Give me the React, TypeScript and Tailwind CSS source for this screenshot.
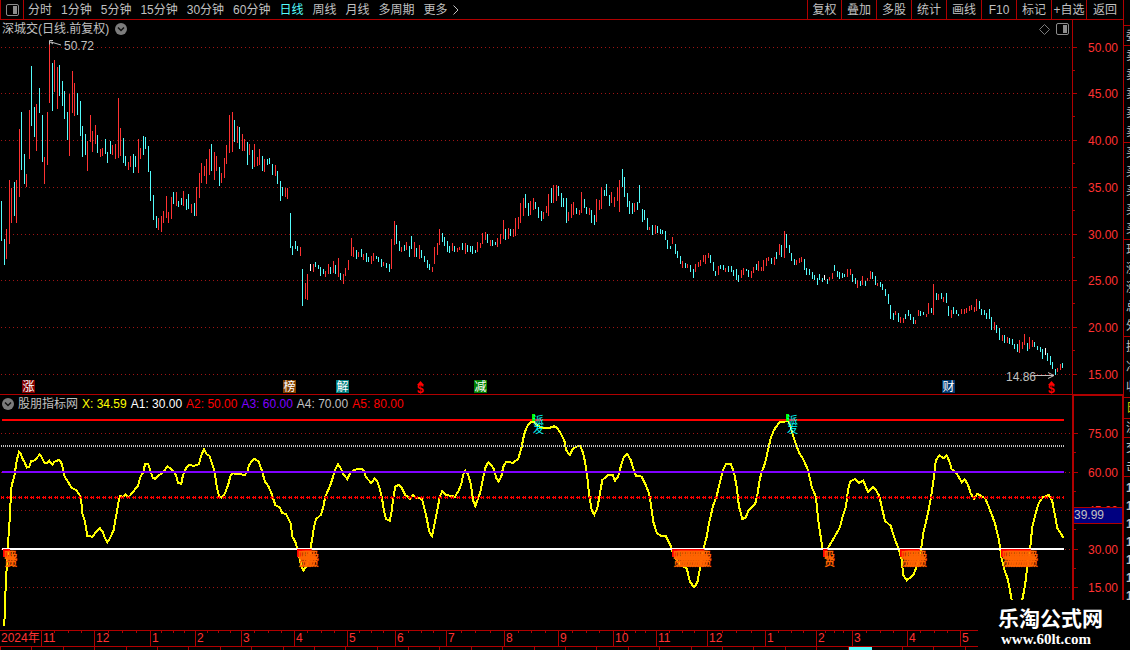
import clsx from "clsx";

const PERIODS = ["分时", "1分钟", "5分钟", "15分钟", "30分钟", "60分钟", "日线", "周线", "月线", "多周期", "更多"];
const TOOLS = ["复权", "叠加", "多股", "统计", "画线", "F10", "标记", "+自选", "返回"];

const FONT = "font-['Liberation_Sans','Noto_Sans_CJK_SC',sans-serif]";

// one entry per trading day: colour (c down, r up, w flat), top, bottom
const CANDLES = `
c201,241 c239,265 r229,259 r180,244 r188,223 c182,216 r180,223 r129,197 c112,170 c154,184
r174,187 r110,159 c66,126 c107,137 r104,151 c88,113 c115,162 r157,184 r112,165 r42,103
c63,111 r60,92 r67,109 c65,96 c81,106 c91,119 c112,140 r94,156 r71,113 r83,116
c93,115 c101,136 c126,157 c134,155 r141,171 r115,142 r131,152 r125,144 c135,153 r149,157
r148,156 c139,154 c152,163 c141,154 r145,155 r144,159 r98,158 r128,156 c138,163 c156,166
r162,170 r156,167 c154,173 c156,167 r139,173 r148,159 c136,155 c137,149 c146,172 c171,201
c195,220 c216,228 r218,230 r216,232 r211,223 r196,218 r212,223 r197,219 c192,204 r192,206
c201,207 c198,205 r191,206 c199,210 c194,209 r204,213 c203,216 r187,216 r173,198 r163,183
r166,176 r159,184 r149,175 c144,171 r152,180 r156,171 c167,186 r173,183 r158,178 r145,164
r115,153 r112,152 c120,142 r126,143 c127,149 r134,151 r139,151 c142,165 r144,155 c150,169
r144,167 r157,166 r149,165 c156,171 r159,172 c159,165 c158,164 c164,175 r165,176 c171,184
c181,201 c187,196 r188,197 r188,199 c213,248 c246,255 c241,249 c246,251 r247,256 c269,306
r283,299 r274,300 w264,271 r264,272 c262,267 c265,269 c267,276 c269,274 r271,277 r264,274
c267,274 r261,273 c265,274 r258,277 c273,280 r274,284 r268,276 r260,270 r238,256 r247,257
c250,259 r252,257 c249,257 r254,260 c253,262 c257,262 r256,264 r253,261 c256,259 c257,262
c259,267 r262,266 c263,268 c264,272 r239,269 r221,245 c225,244 c241,251 r247,252 c245,251
r242,250 c246,257 c236,249 r242,257 c248,257 r245,259 c250,258 c256,262 c260,268 c264,270
r267,272 r247,264 r243,255 r229,245 c233,242 c237,246 c241,252 c246,253 r243,251 c246,252
r248,252 r247,250 c243,250 r243,254 c245,252 c246,252 c246,254 c250,253 r242,252 r243,248
r233,244 r232,240 c234,243 r240,246 c240,246 c242,245 r238,247 r234,244 r220,239 c229,240
r228,239 c229,236 r229,237 r218,236 r217,229 r203,223 r198,216 c194,208 c203,216 r201,215
r198,210 c202,209 c207,218 c211,221 r212,219 r206,213 r194,216 c188,203 r185,203 r185,201
c186,196 c193,207 c198,207 c198,223 r212,221 r204,218 r202,215 c208,214 r210,215 r192,213
c199,208 c207,214 r208,215 c210,223 c215,225 r199,222 r200,210 r187,209 c190,196 c184,196
c195,206 r192,203 r197,207 r187,201 r180,212 c169,187 c177,197 c193,207 c201,214 c203,214
r203,212 c202,210 c185,203 c209,222 c210,220 c218,230 r227,230 c225,235 r225,234 c226,233
c229,234 c230,234 c231,240 c240,249 c246,249 r237,244 c244,254 c251,258 c256,264 r261,268
c263,268 r264,268 c265,272 c269,278 r264,272 r262,267 r260,266 r255,262 r255,264 r253,258
c255,263 c262,271 c271,276 r266,275 c265,269 c265,270 r268,272 c266,272 c266,272 c270,276
c269,280 c275,282 r270,278 r268,275 c269,271 c270,277 r271,278 r267,273 c264,270 r261,271
r267,271 r260,271 r258,266 r257,261 c258,264 r257,265 c252,259 r244,255 c245,257 r231,258
c234,248 c245,253 c253,261 c259,265 r260,265 r258,263 r257,262 c259,270 c268,275 c269,275
c272,279 c275,280 c278,285 c274,280 c278,282 w275,280 c279,284 r277,280 r273,279 c265,271
c271,277 c272,279 c273,278 c274,277 r269,277 r269,275 c274,282 c278,284 r280,288 c281,286
r276,285 c281,286 r278,281 r271,279 c272,279 c276,285 r283,286 c282,287 c284,290 c289,296
c294,304 c305,319 c313,320 r311,315 c313,322 r317,323 r318,323 c314,319 c310,316 c314,320
c317,324 r320,324 r310,316 c311,316 c312,315 r314,317 r303,314 c308,313 r284,315 c293,300
r294,300 c293,299 r297,302 c293,303 c306,316 r310,318 c307,314 c310,314 c314,316 r309,314
r309,314 r308,313 r306,311 r305,310 r307,312 r299,311 c301,309 c309,315 c310,315 c313,319
c309,319 c317,330 r322,330 c325,333 c328,340 r335,341 c335,343 r337,343 c338,344 c339,345
c344,349 c344,352 r340,353 r342,349 r334,345 c343,351 r337,349 r340,347 c342,347 c346,350
c347,352 c349,359 w348,355 c353,361 c356,365 c362,369 c369,375 r368,372 r364,370 c363,368
`
  .trim()
  .split(/\s+/)
  .map((s, i) => {
    const [top, bottom] = s.slice(1).split(",").map(Number);
    return { x: Math.round(1 + i * 2.533), top, bottom, kind: s[0] };
  });

// oscillator curve, three stretches in 1/3 units from their own x origin
const CURVE = [
  {
    x0: 0,
    pts: `13,709 15,640 18,570 21,520 24,470 27,410 30,380 33,300 37,280 43,260 46,240 50,212 57,186 62,192 68,207 74,217
    80,233 88,230 94,213 104,211 112,202 119,194 126,203 133,218 142,218 148,212 157,224 163,215 177,210 184,218 190,240
    194,260 205,277 215,293 228,300 237,312 243,325 247,370 255,395 262,438 278,440 286,428 300,415 308,425 315,445 322,457
    330,445 341,420 347,385 355,340 360,318 370,320 376,313 386,321 394,312 405,298 414,288 421,262 430,246 435,223 445,223
    451,240 458,263 466,267 478,255 490,246 502,229 512,236 520,243 528,255 534,280 544,281 549,255 558,235 568,224 580,228
    597,223 603,198 612,178 620,193 628,197 636,220 644,245 650,290 657,317 665,323 675,310 685,283 692,255 700,250 715,253
    735,254 743,243 747,225 757,212 764,206 776,215 785,240 795,275 806,290 815,312 826,345 840,353 847,370 857,371 872,400
    877,440 886,455 895,485 902,520 910,542 918,530 928,500 932,470 937,445 942,410 948,388 963,374 970,350 976,320 990,288
    1000,258 1007,236 1014,223 1022,235 1030,253 1042,267 1052,247 1062,241 1076,236 1090,239 1098,262 1114,279 1124,265 1132,273`,
  },
  {
    x0: 380,
    pts: `0,298 6,325 12,362 18,387 29,392 34,370 39,330 46,290 56,284 66,295 76,315 90,326 100,315 110,324 126,326 132,350
    140,385 148,425 156,438 163,405 172,360 179,322 187,303 198,315 225,320 235,304 243,285 250,253 256,242 264,253 272,280
    279,330 286,348 293,328 300,310 308,270 315,235 325,217 335,227 343,240 348,262 355,275 364,260 370,230 378,216 400,218
    415,206 425,170 432,135 440,112 450,98 460,93 470,105 485,113 510,113 522,109 532,114 542,130 554,155 558,180 569,195
    578,178 588,170 600,168 608,185 615,215 622,262 627,310 635,360 643,374 652,355 660,310 667,270 685,255 698,254 705,272
    714,260 722,230 732,200 742,192 752,210 760,235 768,257 785,260 795,280 807,310 813,345 820,395 830,428 842,437 857,438
    866,455 873,470 882,498 900,525 920,535 930,575 942,592 952,578 960,535 970,480 980,440 987,400 1000,345 1010,318
    1020,275 1030,238 1038,222 1053,223 1062,248 1070,290 1077,350 1087,387 1097,383 1105,362 1115,352 1126,340 1132,315`,
  },
  {
    x0: 750,
    pts: `30,265 35,247 45,220 52,190 62,145 72,120 88,97 102,97 112,90 120,105 130,140 148,190 160,208 174,240 185,290
    198,322 204,385 212,440 218,478 232,478 245,455 270,412 278,378 288,350 294,300 300,275 314,267 326,279 340,272 354,306
    368,291 378,300 388,318 396,355 405,392 422,408 432,440 446,478 455,510 460,555 470,571 490,555 502,525 513,480 520,430
    534,370 544,318 552,260 557,213 568,196 582,205 590,196 600,220 605,238 620,250 635,277 644,268 654,285 662,310 672,326
    682,311 706,325 720,360 735,400 747,450 754,500 762,535 774,570 785,629 800,650 818,625 826,580 832,530 840,480 847,410
    857,370 866,340 878,322 896,315 906,330 913,365 922,415 932,430 940,443`,
  },
]
  .flatMap(({ x0, pts }) =>
    pts.trim().split(/\s+/).map((p) => {
      const [x, y] = p.split(",").map(Number);
      return `${(x0 + x / 3).toFixed(1)},${(390 + y / 3).toFixed(1)}`;
    }),
  )
  .join(" ");

const PRICE_TICKS = [
  { y: 47, label: "50.00" },
  { y: 93, label: "45.00" },
  { y: 140, label: "40.00" },
  { y: 187, label: "35.00" },
  { y: 234, label: "30.00" },
  { y: 280, label: "25.00" },
  { y: 327, label: "20.00" },
  { y: 374, label: "15.00" },
];

const OSC_TICKS = [
  { y: 433, label: "75.00" },
  { y: 472, label: "60.00" },
  { y: 510, label: "45.00" },
  { y: 549, label: "30.00" },
  { y: 587, label: "15.00" },
];

const EVENTS = [
  { x: 22, text: "涨", fill: "#800000" },
  { x: 283, text: "榜", fill: "#804000" },
  { x: 336, text: "解", fill: "#008080" },
  { x: 474, text: "减", fill: "#008000" },
  { x: 942, text: "财", fill: "#003870" },
];

// runs of buy signals: first x and number of days
const BUY_RUNS = [
  { x: 3, days: 2 },
  { x: 297, days: 5 },
  { x: 672, days: 12 },
  { x: 823, days: 1 },
  { x: 900, days: 7 },
  { x: 1001, days: 11 },
];

const READOUT = [
  { text: "X: 34.59", color: "text-[#ffff00]" },
  { text: "A1: 30.00", color: "text-white" },
  { text: "A2: 50.00", color: "text-[#ff0000]" },
  { text: "A3: 60.00", color: "text-[#8000ff]" },
  { text: "A4: 70.00", color: "text-[#c0c0c0]" },
  { text: "A5: 80.00", color: "text-[#ff0000]" },
];

const MONTHS = [
  { label: "2024年", w: 41 },
  { label: "11", w: 53 },
  { label: "12", w: 56 },
  { label: "1", w: 45 },
  { label: "2", w: 46 },
  { label: "3", w: 53 },
  { label: "4", w: 53 },
  { label: "5", w: 48 },
  { label: "6", w: 51 },
  { label: "7", w: 58 },
  { label: "8", w: 54 },
  { label: "9", w: 55 },
  { label: "10", w: 43 },
  { label: "11", w: 51 },
  { label: "12", w: 58 },
  { label: "1", w: 51 },
  { label: "2", w: 36 },
  { label: "3", w: 55 },
  { label: "4", w: 53 },
  { label: "5", w: 163 },
];

const QUOTE_BLOCKS = [
  { h: "h-[26px]", rows: [] },
  { h: "h-5", rows: ["委"] },
  { h: "h-[97px]", rows: ["卖", "卖", "卖", "卖", "卖"] },
  { h: "h-[97px]", rows: ["买", "买", "买", "买", "买"] },
  { h: "h-[97px]", rows: ["现", "涨", "涨", "总", "外"] },
  { h: "h-[61px]", rows: ["换", "净", "收"] },
  { h: "h-[21px]", rows: ["日"], yellow: true },
  { h: "h-[19px]", rows: ["流"] },
  { h: "h-[39px]", rows: ["交", "击"] },
];

const candleFill = (kind: string) => (kind === "c" ? "#54fcfc" : kind === "r" ? "#ff3232" : "#ffffff");

const PaneIcon = () => (
  <svg width="13" height="12" viewBox="0 0 13 12" aria-hidden="true">
    <rect x="0.5" y="0.5" width="12" height="11" rx="1.5" fill="none" stroke="#8c8c8c" />
    <rect x="7" y="2" width="4" height="8" fill="#8c8c8c" />
  </svg>
);

const CollapseButton = ({ label }: { label: string }) => (
  <button type="button" aria-label={label} className="shrink-0">
    <svg width="12" height="12" viewBox="0 0 12 12" className="block" aria-hidden="true">
      <circle cx="6" cy="6" r="6" fill="#7c7c7c" />
      <path d="M3 4.5 L6 7.5 L9 4.5" fill="none" stroke="#101010" strokeWidth="1.5" />
    </svg>
  </button>
);

const Guide = ({ y }: { y: number }) => (
  <line x1="1" x2="1072" y1={y + 0.5} y2={y + 0.5} stroke="#a01414" strokeDasharray="1 3" />
);

const DividendMark = ({ x }: { x: number }) => (
  <g fill="#ff0000">
    <path d={`M${x} 385 l3.5 -4 l3.5 4 z`} />
    <text x={x} y="393" fontSize="12" fontWeight="bold">$</text>
  </g>
);

const PriceChart = () => (
  <svg viewBox="0 38 1072 356" preserveAspectRatio="none" className="block h-[356px] w-full" role="img" aria-label="日线">
    <g shapeRendering="crispEdges">
      {PRICE_TICKS.map((t) => (
        <Guide key={t.y} y={t.y} />
      ))}
      {CANDLES.map((c) => (
        <rect key={c.x} x={c.x} y={c.top} width="1" height={c.bottom - c.top} fill={candleFill(c.kind)} />
      ))}
    </g>
    <g fill="none" stroke="#c0c0c0">
      <path d="M49.5 44.5 V40.5 H53 M49.5 41.5 L53 44 M51 42 L61 45" />
      <path d="M1032 375.5 H1054 M1048 372.5 L1054 375.5 L1048 378.5" />
    </g>
    <g fill="#c0c0c0" fontSize="12">
      <text x="64" y="50">50.72</text>
      <text x="1006" y="381">14.86</text>
    </g>
    {EVENTS.map((e) => (
      <g key={e.x}>
        <rect x={e.x} y="380" width="13" height="13" fill={e.fill} />
        <text x={e.x + 0.5} y="391" fontSize="12" fill="#ffffff">{e.text}</text>
      </g>
    ))}
    <DividendMark x={417} />
    <DividendMark x={1048} />
  </svg>
);

const SellMark = ({ x }: { x: number }) => (
  <g fontSize="11" fill="#00ffff">
    <rect x={x} y="414" width="3" height="7" fill="#00ff00" />
    <text x={x + 1} y="424">派</text>
    <text x={x + 1} y="433">发</text>
  </g>
);

const Oscillator = () => (
  <svg viewBox="0 412 1072 218" preserveAspectRatio="none" className="block h-[218px] w-full" role="img" aria-label="股朋指标网">
    <g shapeRendering="crispEdges" fill="none">
      {OSC_TICKS.map((t) => (
        <Guide key={t.y} y={t.y} />
      ))}
      <polyline points={CURVE} stroke="#ffff00" strokeWidth="2" />
      <line x1="2" x2="1064" y1="420" y2="420" stroke="#ff0000" strokeWidth="2" />
      <line x1="1" x2="1064" y1="446" y2="446" stroke="#c0c0c0" strokeWidth="2" strokeDasharray="1 1" />
      <line x1="2" x2="1064" y1="472" y2="472" stroke="#8000ff" strokeWidth="2" />
      <g stroke="#ff0000">
        <line x1="1" x2="1064" y1="496.5" y2="496.5" strokeDasharray="1 1 1 3" />
        <line x1="1" x2="1064" y1="497.5" y2="497.5" strokeDasharray="4 2" strokeDashoffset="1" />
        <line x1="1" x2="1064" y1="498.5" y2="498.5" strokeDasharray="1 1 1 3" />
      </g>
      <line x1="2" x2="1064" y1="549" y2="549" stroke="#ffffff" strokeWidth="2" />
    </g>
    {BUY_RUNS.map((run) => (
      <g key={run.x} fontSize="11" fontWeight="bold" fill="#ff6400">
        <rect x={run.x} y="549" width={run.days * 2.53 + 2} height="3" fill="#ff0000" />
        <rect x={run.x} y="549" width="4" height="8" fill="#ff0000" />
        {Array.from({ length: run.days }, (_, i) => (
          <g key={i}>
            <text x={run.x + 1 + i * 2.53} y="560">吸</text>
            <text x={run.x + 1 + i * 2.53} y="566">货</text>
          </g>
        ))}
      </g>
    ))}
    <SellMark x={532} />
    <SellMark x={786} />
  </svg>
);

type AxisProps = { top: number; height: number; left: number; ticks: { y: number; label: string }[] };

const AxisTicks = ({ top, height, left, ticks }: AxisProps) => (
  <svg width="48" height={height} viewBox={`${left} ${top} 48 ${height}`} className="block">
    {ticks.map((t, i) => (
      <g key={t.y}>
        <path
          d={`M${left} ${t.y + 0.5} h4 ${ticks[i + 1] ? `M${left} ${Math.floor((t.y + ticks[i + 1].y) / 2) + 0.5} h2` : ""}`}
          stroke="#b00000"
        />
        <text x="1118" y={t.y + 5} textAnchor="end" fontSize="12" fill="#ff3232">{t.label}</text>
      </g>
    ))}
  </svg>
);

const Toolbar = () => (
  <header className="flex h-5 items-stretch justify-between border-b border-[#b00000]">
    <div className="flex">
      <button type="button" aria-label="侧栏" className="flex w-6 items-center justify-center border-x border-[#b00000]">
        <PaneIcon />
      </button>
      <nav className="flex items-center gap-[9px] pl-1">
        {PERIODS.map((p) => (
          <button key={p} type="button" className={clsx("whitespace-nowrap", p === "日线" && "text-[#54fcfc]")}>
            {p}
          </button>
        ))}
        <svg width="6" height="10" viewBox="0 0 6 10" className="-ml-1" aria-hidden="true">
          <path d="M0.5 0.5 L5 5 L0.5 9.5" fill="none" stroke="#c0c0c0" />
        </svg>
      </nav>
    </div>
    <div className="flex">
      {TOOLS.map((t) => (
        <button
          key={t}
          type="button"
          className="w-[35px] border-l border-[#b00000] whitespace-nowrap first:w-[34px] last:w-[37px]"
        >
          {t}
        </button>
      ))}
    </div>
  </header>
);

const TimeAxis = () => (
  <div className="flex h-[17px] border-y border-[#b00000] text-[#ff3232]">
    {MONTHS.map((m, i) => (
      <div
        key={i}
        className={clsx("relative min-w-0 leading-[15px] whitespace-nowrap", i > 0 ? "border-l border-[#b00000] pl-px" : "pl-px")}
        style={{ flex: `${m.w} ${m.w} ${m.w}px` }}
      >
        {m.label}
        {i > 0 && (
          <div className="absolute inset-x-0 top-0 flex justify-evenly">
            <i className="h-0.5 w-px bg-[#b00000]" />
            <i className="h-0.5 w-px bg-[#b00000]" />
            <i className="h-0.5 w-px bg-[#b00000]" />
          </div>
        )}
      </div>
    ))}
  </div>
);

const QuoteStrip = () => (
  <aside className="w-[7px] shrink-0 overflow-hidden border-l border-[#b00000]">
    {QUOTE_BLOCKS.map((b, i) => (
      <div
        key={i}
        className={clsx(
          "flex flex-col justify-around border-b border-[#b00000] pl-0.5 leading-3",
          b.h,
          b.yellow && "text-[#c8c800]",
        )}
      >
        {b.rows.map((r, j) => (
          <span key={j} className="whitespace-nowrap">{r}</span>
        ))}
      </div>
    ))}
    <div className="pt-0.5 pl-0.5 leading-[18px] font-bold">
      {Array.from({ length: 7 }, (_, i) => (
        <div key={i}>1</div>
      ))}
    </div>
  </aside>
);

const App = () => {
  return (
    <div className={clsx("relative flex overflow-hidden bg-black text-[12px] leading-4 text-[#c0c0c0]", FONT)}>
      <main className="min-w-0 flex-1">
        <Toolbar />

        <section className="flex">
          <div className="min-w-0 flex-1">
            <div className="flex h-[18px] items-center justify-between pr-[3px] pl-0.5">
              <div className="flex items-center gap-1.5">
                <h1>深城交(日线.前复权)</h1>
                <CollapseButton label="收起主图" />
              </div>
              <div className="flex items-center gap-1.5">
                <svg width="11" height="11" viewBox="0 0 11 11" aria-hidden="true">
                  <path d="M5.5 0.5 L10.5 5.5 L5.5 10.5 L0.5 5.5 Z" fill="none" stroke="#7c7c7c" />
                </svg>
                <PaneIcon />
              </div>
            </div>
            <PriceChart />
          </div>
          <div className="w-[51px] border-l border-[#b00000]">
            <AxisTicks top={20} height={374} left={1073} ticks={PRICE_TICKS} />
          </div>
        </section>

        <section className="flex border-t border-[#b00000]">
          <div className="min-w-0 flex-1">
            <div className="flex h-[17px] items-center gap-1 pl-0.5 whitespace-nowrap">
              <div className="flex items-center gap-1">
                <CollapseButton label="收起副图" />
                <h2>股朋指标网</h2>
              </div>
              {READOUT.map((r) => (
                <span key={r.text} className={r.color}>{r.text}</span>
              ))}
            </div>
            <Oscillator />
          </div>
          <div className="relative w-[51px] border-t border-r border-l-2 border-[#b00000]">
            <AxisTicks top={396} height={234} left={1074} ticks={OSC_TICKS} />
            <div className="absolute inset-x-0 top-[111px] h-[17px] border-y border-[#b00000] bg-[#000080] leading-[15px]">
              39.99
            </div>
          </div>
        </section>

        <TimeAxis />
        <div className="flex h-[3px] justify-between overflow-hidden">
          {Array.from({ length: 36 }, (_, i) => (
            <i key={i} className={clsx("h-[3px] border-l border-[#b00000]", i === 27 && "w-6 bg-[#54fcfc]")} />
          ))}
        </div>
      </main>

      <QuoteStrip />

      <footer className="absolute right-0 bottom-0 flex h-[50px] w-[152px] flex-col bg-black pt-2 pl-5 text-white">
        <span className="text-[21px] leading-[22px] font-bold">乐淘公式网</span>
        <span className="pl-[3px] font-['Liberation_Serif',serif] text-[15px] leading-[18px] font-bold">www.60lt.com</span>
      </footer>
    </div>
  );
};

export default App;
